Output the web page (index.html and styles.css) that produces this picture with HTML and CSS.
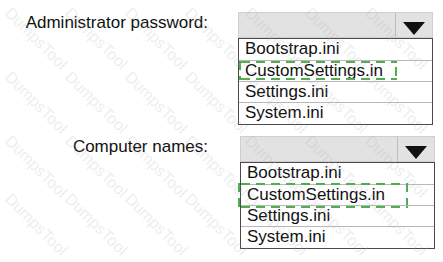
FILE: index.html
```html
<html lang="en">
  <head>
    <meta charset="UTF-8" />
    <title>Deployment settings</title>
    <link rel="stylesheet" href="styles.css">
  </head>
  <body>
    <div class="page">
      <div class="field first">
        <div class="label">Administrator password:</div>
        <div class="dropdown">
          <div class="select">
            <div class="value"></div>
            <div class="arrow"></div>
          </div>
          <div class="options">
            <div class="option">Bootstrap.ini</div>
            <div class="option picked">CustomSettings.in</div>
            <div class="option">Settings.ini</div>
            <div class="option">System.ini</div>
          </div>
        </div>
      </div>
      <div class="field second">
        <div class="label">Computer names:</div>
        <div class="dropdown">
          <div class="select">
            <div class="value"></div>
            <div class="arrow"></div>
          </div>
          <div class="options">
            <div class="option">Bootstrap.ini</div>
            <div class="option picked">CustomSettings.in</div>
            <div class="option">Settings.ini</div>
            <div class="option">System.ini</div>
          </div>
        </div>
      </div>

      <!-- faint watermark over the whole picture -->
      <div class="watermark">
        <span style="left:14px;top:4px">DumpsTool</span>
        <span style="left:74px;top:4px">DumpsTool</span>
        <span style="left:134px;top:4px">DumpsTool</span>
        <span style="left:194px;top:4px">DumpsTool</span>
        <span style="left:254px;top:4px">DumpsTool</span>
        <span style="left:314px;top:4px">DumpsTool</span>
        <span style="left:374px;top:4px">DumpsTool</span>
        <span style="left:14px;top:68px">DumpsTool</span>
        <span style="left:74px;top:68px">DumpsTool</span>
        <span style="left:134px;top:68px">DumpsTool</span>
        <span style="left:194px;top:68px">DumpsTool</span>
        <span style="left:254px;top:68px">DumpsTool</span>
        <span style="left:314px;top:68px">DumpsTool</span>
        <span style="left:374px;top:68px">DumpsTool</span>
        <span style="left:14px;top:132px">DumpsTool</span>
        <span style="left:74px;top:132px">DumpsTool</span>
        <span style="left:134px;top:132px">DumpsTool</span>
        <span style="left:194px;top:132px">DumpsTool</span>
        <span style="left:254px;top:132px">DumpsTool</span>
        <span style="left:314px;top:132px">DumpsTool</span>
        <span style="left:374px;top:132px">DumpsTool</span>
        <span style="left:14px;top:190px">DumpsTool</span>
        <span style="left:74px;top:190px">DumpsTool</span>
        <span style="left:134px;top:190px">DumpsTool</span>
        <span style="left:194px;top:190px">DumpsTool</span>
        <span style="left:254px;top:190px">DumpsTool</span>
        <span style="left:314px;top:190px">DumpsTool</span>
        <span style="left:374px;top:190px">DumpsTool</span>
      </div>
    </div>
  </body>
</html>
```

FILE: styles.css
```css
html,
body {
  margin: 0;
  padding: 0;
}
* {
  box-sizing: border-box;
}
body {
  font-family: "Liberation Sans", Arial, sans-serif;
  font-size: 17px;
  color: #111;
  background: #fff;
}
.page {
  position: relative;
  width: 443px;
  height: 262px;
  overflow: hidden;
  padding-top: 12px;
}
/* One label + dropdown row */
.field {
  display: flex;
  align-items: flex-start;
}
.field.second {
  margin-top: 11px;
}
.label {
  width: 208px;
  text-align: right;
  padding-top: 1px;
  line-height: 20px;
}
.dropdown {
  width: 195px;
  margin-left: 30px;
}
.field.second .dropdown {
  margin-left: 32px;
}
/* Closed select header */
.select {
  display: flex;
  height: 26px;
  background: #e2e2e2;
  border: 1px solid #cfcfcf;
}
.value {
  flex: 1;
  border-right: 1px solid #bdbdbd;
}
.arrow {
  width: 36px;
  display: flex;
  align-items: center;
  justify-content: center;
}
.arrow::before {
  content: "";
  border-left: 11px solid transparent;
  border-right: 11px solid transparent;
  border-top: 13px solid #111;
  margin-top: 6px;
}
/* Option list */
.options {
  border: 1px solid #4a4a4a;
  background: #fff;
}
.option {
  position: relative;
  height: 21px;
  line-height: 20px;
  padding-left: 6px;
  border-top: 1px solid #b8b8b8;
}
.option:first-child {
  border-top: none;
}
.option:last-child {
  height: 22px;
}
/* Green dashed mark round the chosen answer */
.option.picked::after {
  content: "";
  position: absolute;
  left: 0;
  top: 0;
  width: 158px;
  height: 19px;
  background:
    linear-gradient(90deg, #4fae4f 9px, transparent 9px) 2px 0 / 15px 2px repeat-x,
    linear-gradient(90deg, #4fae4f 9px, transparent 9px) 2px 100% / 15px 2px repeat-x,
    linear-gradient(#4fae4f 9px, transparent 9px) 0 0 / 2px 15px repeat-y,
    linear-gradient(#4fae4f 9px, transparent 9px) 100% 6px / 2px 15px no-repeat;
}
.field.second .option.picked::after {
  left: -3px;
  top: -2px;
  width: 170px;
  height: 25px;
  background:
    linear-gradient(90deg, #4fae4f 9px, transparent 9px) 3px 0 / 15px 2px repeat-x,
    linear-gradient(90deg, #4fae4f 9px, transparent 9px) 3px 100% / 15px 2px repeat-x,
    linear-gradient(#4fae4f 9px, transparent 9px) 0 0 / 2px 15px repeat-y,
    linear-gradient(#4fae4f 9px, transparent 9px) 100% 0 / 2px 15px repeat-y;
}
.watermark {
  position: absolute;
  inset: 0;
  pointer-events: none;
}
.watermark span {
  position: absolute;
  font-size: 16px;
  color: rgba(170, 170, 170, 0.22);
  transform: rotate(45deg);
  transform-origin: left top;
  white-space: nowrap;
}
```
